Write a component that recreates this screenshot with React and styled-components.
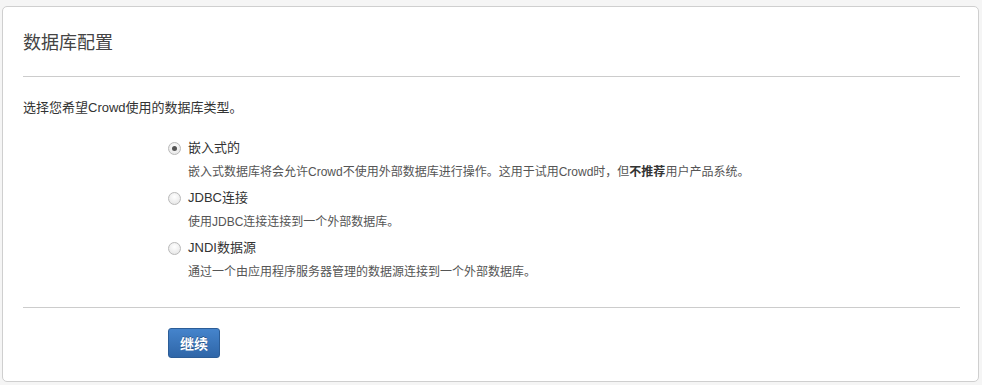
import React from "react";
import styled, { createGlobalStyle } from "styled-components";

const GlobalStyle = createGlobalStyle`
  html, body {
    margin: 0;
    padding: 0;
    background: #f5f5f5;
    font-family: "Liberation Sans", Arial, "Noto Sans CJK SC", sans-serif;
    color: #333;
  }
`;

const Page = styled.div`
  padding: 6px 3px 3px 2px;
`;

const Panel = styled.div`
  background: #fff;
  border: 1px solid #cfcfcf;
  border-radius: 5px;
  padding: 0 18px 0 20px;
  height: 376px;
  box-sizing: border-box;
`;

const Title = styled.h2`
  margin: 0;
  padding: 24px 0 0 0;
  height: 45px;
  font-size: 18px;
  font-weight: normal;
  color: #444;
  line-height: 24px;
  border-bottom: 1px solid #ccc;
`;

const Intro = styled.p`
  margin: 0;
  padding-top: 21px;
  font-size: 13px;
  line-height: 20px;
  color: #333;
`;

const Options = styled.div`
  display: flex;
  flex-direction: column;
  padding: 20px 0 0 145px;
  height: 190px;
  box-sizing: border-box;
  border-bottom: 1px solid #ccc;
`;

const Option = styled.label`
  display: flex;
  flex-direction: column;
  height: 50px;
`;

const OptionHead = styled.span`
  display: flex;
  align-items: center;
  gap: 7px;
  font-size: 13px;
  line-height: 20px;
  color: #333;
`;

const Radio = styled.span`
  width: 11px;
  height: 11px;
  border-radius: 50%;
  border: 1px solid #b9b9b9;
  background: radial-gradient(circle at 50% 35%, #fff, #e2e2e2);
  display: flex;
  align-items: center;
  justify-content: center;
  &::after {
    content: "";
    width: 5px;
    height: 5px;
    border-radius: 50%;
    background: ${(p) => (p.checked ? "#555" : "transparent")};
  }
`;

const Desc = styled.span`
  padding: 5px 0 0 20px;
  font-size: 12px;
  line-height: 18px;
  color: #555;
  b {
    color: #333;
  }
`;

const Actions = styled.div`
  padding: 20px 0 0 145px;
`;

const Button = styled.button`
  height: 30px;
  padding: 0 11px;
  border: 1px solid #2c5d97;
  border-radius: 3px;
  background: linear-gradient(#4584cc, #2f66a8);
  color: #fff;
  font-family: inherit;
  font-size: 14px;
  font-weight: bold;
  text-shadow: 0 -1px 0 rgba(0, 0, 0, 0.3);
  cursor: pointer;
`;

const options = [
  {
    label: "嵌入式的",
    checked: true,
    desc: (
      <>
        嵌入式数据库将会允许Crowd不使用外部数据库进行操作。这用于试用Crowd时，但<b>不推荐</b>用户产品系统。
      </>
    ),
  },
  { label: "JDBC连接", desc: "使用JDBC连接连接到一个外部数据库。" },
  { label: "JNDI数据源", desc: "通过一个由应用程序服务器管理的数据源连接到一个外部数据库。" },
];

export default function App() {
  return (
    <>
      <GlobalStyle />
      <Page>
        <Panel>
          <Title>数据库配置</Title>
          <Intro>选择您希望Crowd使用的数据库类型。</Intro>
          <Options>
            {options.map((o) => (
              <Option key={o.label}>
                <OptionHead>
                  <Radio checked={o.checked} />
                  {o.label}
                </OptionHead>
                <Desc>{o.desc}</Desc>
              </Option>
            ))}
          </Options>
          <Actions>
            <Button>继续</Button>
          </Actions>
        </Panel>
      </Page>
    </>
  );
}
